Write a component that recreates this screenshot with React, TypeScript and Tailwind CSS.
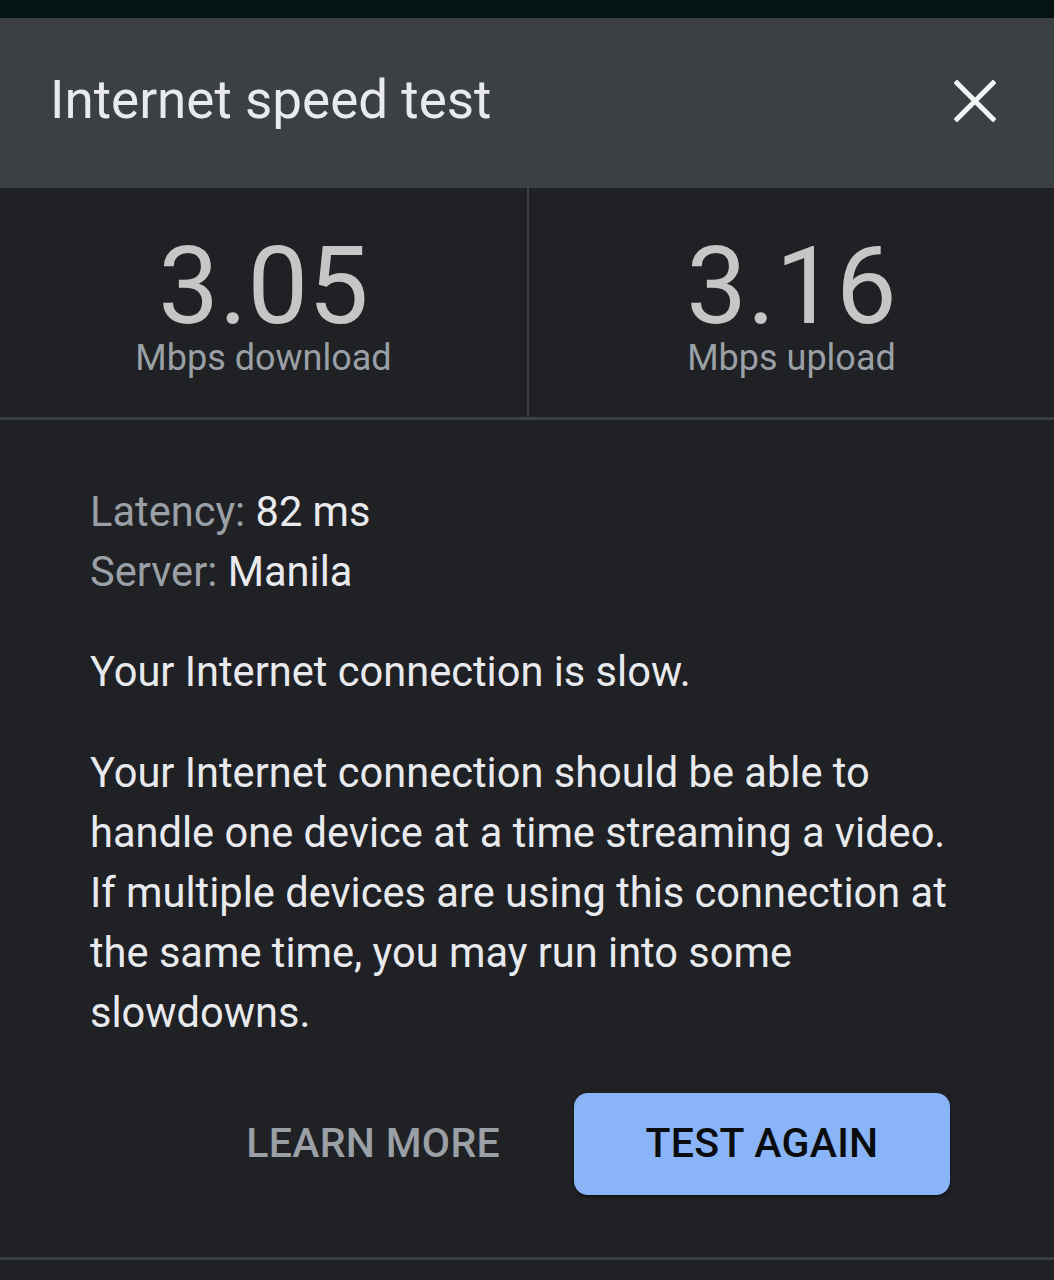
export default function App() {
  return (
    <div className="w-[1054px] h-[1280px] bg-[#202124] overflow-hidden" style={{ fontFamily: "Roboto, 'Noto Sans', sans-serif" }}>
      <div className="h-[18px] bg-[#061314]" />
      <div className="h-[170px] bg-[#3c4043] flex items-center justify-between pl-[50px] pr-[58px]">
        <div className="text-[53px] leading-none text-[#e8eaed] mt-[-5px]">Internet speed test</div>
        <svg width="42" height="42" viewBox="0 0 42 42" className="mt-[-5px]">
          <path d="M3 3 L39 39 M39 3 L3 39" stroke="#f1f3f4" strokeWidth="5" strokeLinecap="square" />
        </svg>
      </div>
      <div className="h-[232px] flex border-b-[3px] border-[#3c4043]">
        <div className="w-[529px] border-r-2 border-[#3c4043] flex flex-col items-center pt-[48px]">
          <div className="text-[108px] leading-[100px] text-[#c4c7c5]">3.05</div>
          <div className="text-[36px] leading-[40px] text-[#9aa0a6] mt-[2px]">Mbps download</div>
        </div>
        <div className="flex-1 flex flex-col items-center pt-[48px]">
          <div className="text-[108px] leading-[100px] text-[#c4c7c5]">3.16</div>
          <div className="text-[36px] leading-[40px] text-[#9aa0a6] mt-[2px]">Mbps upload</div>
        </div>
      </div>
      <div className="pl-[90px] pt-[62px]">
        <div className="text-[41.6px] leading-[60px]">
          <div><span className="text-[#9aa0a6]">Latency: </span><span className="text-[#e8eaed]">82 ms</span></div>
          <div><span className="text-[#9aa0a6]">Server: </span><span className="text-[#e8eaed]">Manila</span></div>
        </div>
        <div className="text-[41.6px] leading-[60px] text-[#e8eaed] mt-[40px]">Your Internet connection is slow.</div>
        <div className="text-[41.6px] leading-[60px] text-[#e8eaed] mt-[41px] w-[872px]">
          Your Internet connection should be able to handle one device at a time streaming a video. If multiple devices are using this connection at the same time, you may run into some slowdowns.
        </div>
      </div>
      <div className="flex items-center justify-end pr-[104px] mt-[50px] gap-[74px]">
        <div className="text-[41px] font-medium text-[#9aa0a6] tracking-[0.3px]">LEARN MORE</div>
        <div className="w-[376px] h-[102px] rounded-[14px] bg-[#8ab4f8] flex items-center justify-center text-[41px] font-medium text-[#0b0c0e] tracking-[0.3px] shadow-[0_2px_3px_rgba(0,0,0,0.5)]">TEST AGAIN</div>
      </div>
      <div className="mt-[62px] h-[3px] bg-[#3c4043]" />
    </div>
  );
}
